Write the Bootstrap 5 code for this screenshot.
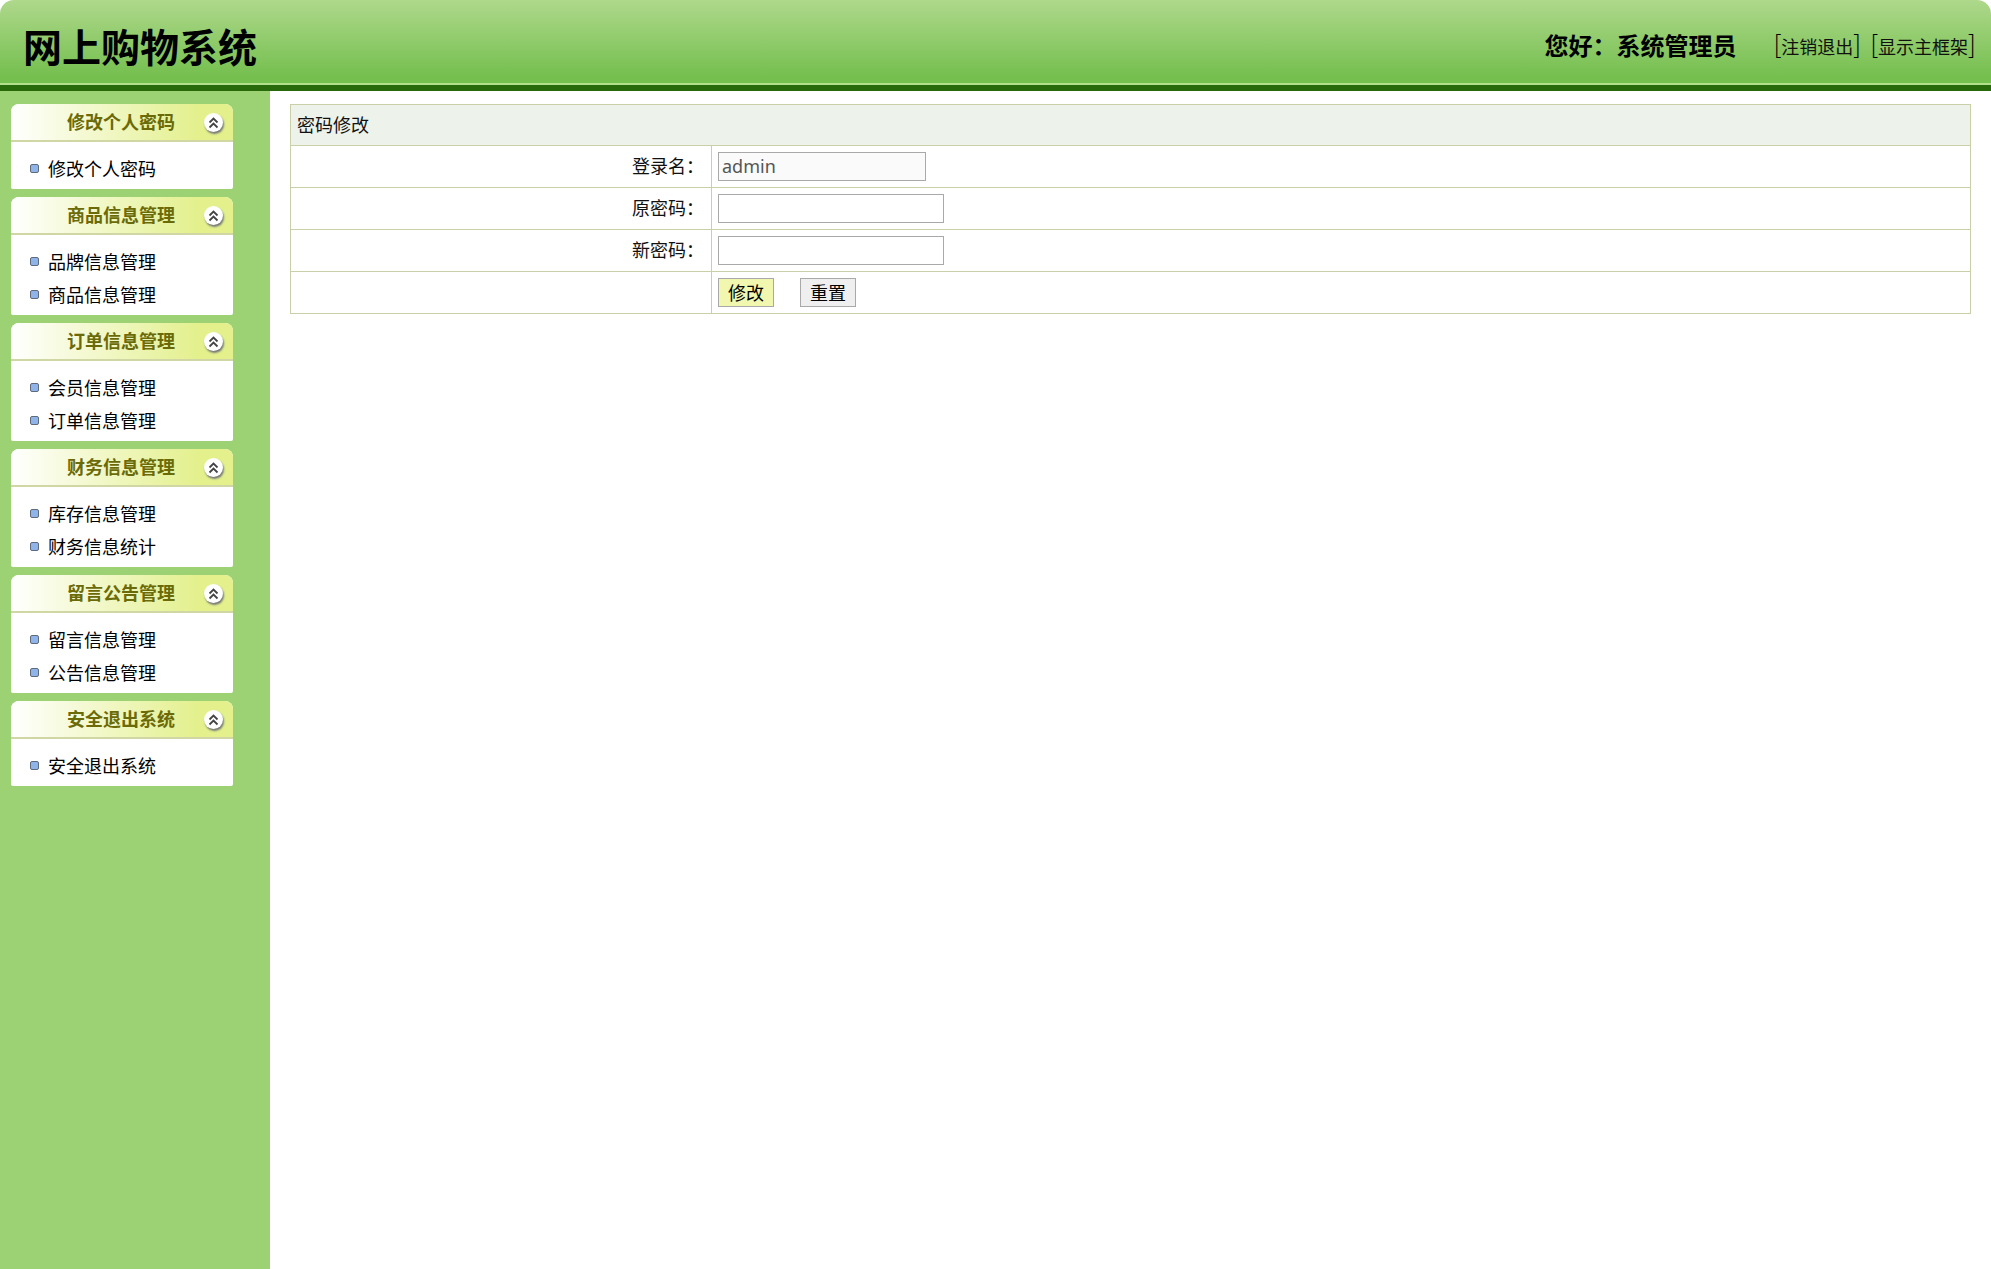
<!DOCTYPE html>
<html lang="zh-CN">
<head>
<meta charset="utf-8">
<title>网上购物系统</title>
<link rel="stylesheet" href="https://cdn.jsdelivr.net/npm/bootstrap@5.3.0/dist/css/bootstrap.min.css">
<style>
html,body{height:100%}
body{font-family:"Noto Sans","Noto Sans CJK SC",sans-serif;font-size:18px;color:#000;background:#fff;overflow:hidden}
.topbar{height:91px;background:linear-gradient(#aed88b,#74bf4e 91%);border-bottom:6px solid #286a0b;box-shadow:inset 0 -2px 0 #b2df8c;border-radius:14px 14px 0 0;padding:4px 15px 0 23px}
.brand{font-size:39px;font-weight:700;line-height:1;margin:0;padding-top:2px;font-family:"Noto Sans CJK SC",sans-serif}
.hello{font-size:24px;font-weight:700;font-family:"Noto Sans CJK SC",sans-serif;margin-right:28px;line-height:1}
.toplink{color:#111;text-decoration:none;font-size:18px;margin-left:9px;font-family:"Noto Sans CJK SC",sans-serif;font-weight:400;white-space:nowrap;padding-top:3px}
.toplink b{font-size:25px;font-weight:300;line-height:1;position:relative;top:-2px;color:#000;vertical-align:-2px}
.shell{height:calc(100vh - 91px)}
.sidebar{width:270px;flex:none;background:#9cd274;padding:13px 37px 0 11px}
.sidecard{border:0;border-radius:8px 8px 2px 2px;background:#fff;margin-bottom:8px;padding:0 0 4px}
.sidehead{height:38px;background:linear-gradient(90deg,#fff,#e3f08c 85%);border:0;border-bottom:2px solid #d0d6a4;border-radius:8px 8px 0 0;color:#6b6a08;font-weight:700;font-size:18px;font-family:"Noto Sans CJK SC",sans-serif;position:relative;text-align:center;line-height:35px}
.sidehead span{display:block;margin-left:-2px}
.foldbtn{position:absolute;right:10px;top:9px;width:19px;height:19px;border-radius:50%;background:#fff;box-shadow:1px 2px 2px #777;display:flex;align-items:center;justify-content:center}
.sidelist{padding:10px 0 0;margin:0;list-style:none}
.sidelist li{height:33px;line-height:33px;display:flex;align-items:center;font-size:18px;font-family:"Noto Sans CJK SC",sans-serif;white-space:nowrap}
.sidelist a{color:#000;text-decoration:none}
.dot{width:9px;height:9px;border-radius:2px;background:#8fb4ea;border:1px solid #5f6b7a;margin:0 9px 0 19px;flex:none}
.main{padding:13px 20px 0 20px;flex:1 1 auto;min-width:0}
.formtable{margin:0;border-collapse:collapse;width:100%;table-layout:fixed;border-color:#c9d0a8}
.formtable .c1{width:421px}
.formtable td{border:1px solid #c9d0a8;padding:0 6px;height:42px;vertical-align:middle;font-family:"Noto Sans CJK SC",sans-serif;font-size:18px;line-height:1;background:#fff;color:#111}
.formtable .cap{background:#edf3ea;height:41px;padding-bottom:2px}
.formtable .lab{text-align:right;padding-right:7px;padding-bottom:4px}
.field{display:block;height:29px;border:1px solid #a9a9a9;border-radius:0;background:#fff;padding:0 3px 2px;font-size:18px;color:#555;font-family:"Noto Sans",sans-serif;outline:0}
.field.w1{width:208px;background:#fafafa}
.field.w2{width:226px}
.act{height:29px;width:56px;padding:0 0 2px;border:1px solid #a9a9a9;border-radius:0;font-size:18px;line-height:1;font-family:"Noto Sans CJK SC",sans-serif;color:#000;background:#efefef;vertical-align:middle}
.act.yes{background:#f1f7ae;margin-right:26px}
</style>
</head>
<body>
<div class="topbar d-flex align-items-center justify-content-between">
  <h1 class="brand">网上购物系统</h1>
  <div class="d-flex align-items-center">
    <span class="hello">您好：系统管理员</span>
    <a class="toplink" href="#"><b>[</b>注销退出<b>]</b></a>
    <a class="toplink" href="#"><b>[</b>显示主框架<b>]</b></a>
  </div>
</div>
<div class="shell d-flex">
  <aside class="sidebar">
    <div class="card sidecard">
      <div class="sidehead"><span>修改个人密码</span><i class="foldbtn"><svg width="11" height="12" viewBox="0 0 11 12" fill="none" stroke="#444" stroke-width="1.8"><path d="M1.5 5.5 5.5 1.5 9.5 5.5M1.5 10.5 5.5 6.5 9.5 10.5"/></svg></i></div>
      <ul class="sidelist"><li><i class="dot"></i><a href="#">修改个人密码</a></li></ul>
    </div>
    <div class="card sidecard">
      <div class="sidehead"><span>商品信息管理</span><i class="foldbtn"><svg width="11" height="12" viewBox="0 0 11 12" fill="none" stroke="#444" stroke-width="1.8"><path d="M1.5 5.5 5.5 1.5 9.5 5.5M1.5 10.5 5.5 6.5 9.5 10.5"/></svg></i></div>
      <ul class="sidelist"><li><i class="dot"></i><a href="#">品牌信息管理</a></li><li><i class="dot"></i><a href="#">商品信息管理</a></li></ul>
    </div>
    <div class="card sidecard">
      <div class="sidehead"><span>订单信息管理</span><i class="foldbtn"><svg width="11" height="12" viewBox="0 0 11 12" fill="none" stroke="#444" stroke-width="1.8"><path d="M1.5 5.5 5.5 1.5 9.5 5.5M1.5 10.5 5.5 6.5 9.5 10.5"/></svg></i></div>
      <ul class="sidelist"><li><i class="dot"></i><a href="#">会员信息管理</a></li><li><i class="dot"></i><a href="#">订单信息管理</a></li></ul>
    </div>
    <div class="card sidecard">
      <div class="sidehead"><span>财务信息管理</span><i class="foldbtn"><svg width="11" height="12" viewBox="0 0 11 12" fill="none" stroke="#444" stroke-width="1.8"><path d="M1.5 5.5 5.5 1.5 9.5 5.5M1.5 10.5 5.5 6.5 9.5 10.5"/></svg></i></div>
      <ul class="sidelist"><li><i class="dot"></i><a href="#">库存信息管理</a></li><li><i class="dot"></i><a href="#">财务信息统计</a></li></ul>
    </div>
    <div class="card sidecard">
      <div class="sidehead"><span>留言公告管理</span><i class="foldbtn"><svg width="11" height="12" viewBox="0 0 11 12" fill="none" stroke="#444" stroke-width="1.8"><path d="M1.5 5.5 5.5 1.5 9.5 5.5M1.5 10.5 5.5 6.5 9.5 10.5"/></svg></i></div>
      <ul class="sidelist"><li><i class="dot"></i><a href="#">留言信息管理</a></li><li><i class="dot"></i><a href="#">公告信息管理</a></li></ul>
    </div>
    <div class="card sidecard">
      <div class="sidehead"><span>安全退出系统</span><i class="foldbtn"><svg width="11" height="12" viewBox="0 0 11 12" fill="none" stroke="#444" stroke-width="1.8"><path d="M1.5 5.5 5.5 1.5 9.5 5.5M1.5 10.5 5.5 6.5 9.5 10.5"/></svg></i></div>
      <ul class="sidelist"><li><i class="dot"></i><a href="#">安全退出系统</a></li></ul>
    </div>
  </aside>
  <main class="main">
    <table class="table formtable">
      <colgroup><col class="c1"><col></colgroup>
      <tbody>
        <tr><td class="cap" colspan="2">密码修改</td></tr>
        <tr><td class="lab">登录名：</td><td><input class="field w1" type="text" value="admin" readonly></td></tr>
        <tr><td class="lab">原密码：</td><td><input class="field w2" type="password"></td></tr>
        <tr><td class="lab">新密码：</td><td><input class="field w2" type="password"></td></tr>
        <tr><td class="lab"></td><td><button class="act yes" type="button">修改</button><button class="act" type="reset">重置</button></td></tr>
      </tbody>
    </table>
  </main>
</div>
<script src="https://cdn.jsdelivr.net/npm/bootstrap@5.3.0/dist/js/bootstrap.bundle.min.js"></script>
</body>
</html>
